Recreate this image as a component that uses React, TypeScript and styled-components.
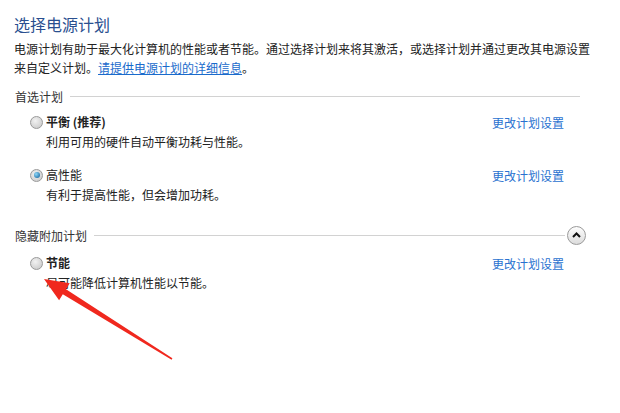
import React, { FC } from "react";
import styled, { createGlobalStyle } from "styled-components";

const GlobalStyle = createGlobalStyle`
  html, body {
    margin: 0;
    padding: 0;
    background: #fff;
  }
  body {
    font-family: "Noto Sans CJK SC", "Noto Sans", sans-serif;
    color: #222;
    font-size: 12px;
  }
`;

type Plan = {
  name: string;
  desc: string;
  bold: boolean;
  checked: boolean;
};

const preferred: Plan[] = [
  { name: "平衡 (推荐)", desc: "利用可用的硬件自动平衡功耗与性能。", bold: true, checked: false },
  { name: "高性能", desc: "有利于提高性能，但会增加功耗。", bold: false, checked: true },
];

const extra: Plan[] = [
  { name: "节能", desc: "尽可能降低计算机性能以节能。", bold: true, checked: false },
];

const Page = styled.div`
  position: relative;
  width: 620px;
  height: 413px;
  padding: 14px 0 0 14px;
  box-sizing: border-box;
  overflow: hidden;
`;

const Content = styled.div`
  width: 566px;
  display: flex;
  flex-direction: column;
`;

const Title = styled.h1`
  margin: 0;
  font-size: 16px;
  line-height: 20px;
  font-weight: normal;
  color: #2a4f8f;
`;

const Intro = styled.p`
  margin: 5px 0 0;
  line-height: 19px;
  white-space: nowrap;
`;

const Link = styled.a<{ $plain?: boolean }>`
  color: ${({ $plain }) => ($plain ? "#2a72d0" : "#1a6bcc")};
  text-decoration: ${({ $plain }) => ($plain ? "none" : "underline")};
  cursor: pointer;
`;

const SectionHeader = styled.div<{ $top: number }>`
  display: flex;
  align-items: center;
  height: 20px;
  margin-top: ${({ $top }) => $top}px;
  padding-left: 1px;
  color: #333;
`;

const Rule = styled.div`
  flex: 1;
  height: 1px;
  margin-left: 7px;
  background: #d2d2d2;
`;

const ToggleButton = styled.button`
  width: 19px;
  height: 19px;
  margin-left: 2px;
  margin-right: -6px;
  padding: 0;
  border-radius: 50%;
  border: 1px solid #9a9a9a;
  background: linear-gradient(#fdfdfd, #dcdcdc);
  display: flex;
  align-items: center;
  justify-content: center;
`;

const PlanList = styled.div<{ $top: number }>`
  display: flex;
  flex-direction: column;
  gap: 13px;
  padding: 0 16px 0 16px;
  margin-top: ${({ $top }) => $top}px;
`;

const PlanRow = styled.div`
  display: grid;
  grid-template-columns: 16px 1fr auto;
  grid-template-rows: 20px 20px;
  align-items: center;
`;

const Radio = styled.span<{ $checked: boolean }>`
  width: 11px;
  height: 11px;
  border-radius: 50%;
  border: 1px solid #9a9a9a;
  background: radial-gradient(circle at 40% 35%, #f2f2f2, #c4c4c4);
  display: flex;
  align-items: center;
  justify-content: center;
  box-sizing: content-box;

  &::after {
    content: "";
    display: ${({ $checked }) => ($checked ? "block" : "none")};
    width: 6px;
    height: 6px;
    border-radius: 50%;
    background: radial-gradient(circle at 35% 35%, #8fd8f8, #0a5a96);
  }
`;

const PlanName = styled.span<{ $bold: boolean }>`
  font-weight: ${({ $bold }) => ($bold ? 700 : 400)};
  line-height: 20px;
`;

const PlanDesc = styled.span`
  grid-column: 2 / 4;
  line-height: 20px;
`;

const Arrow = styled.svg`
  position: absolute;
  left: 0;
  top: 0;
  pointer-events: none;
`;

const PlanItem: FC<{ plan: Plan }> = ({ plan }) => (
  <PlanRow>
    <Radio $checked={plan.checked} />
    <PlanName $bold={plan.bold}>{plan.name}</PlanName>
    <Link $plain>更改计划设置</Link>
    <PlanDesc>{plan.desc}</PlanDesc>
  </PlanRow>
);

export default function App() {
  return (
    <Page>
      <GlobalStyle />
      <Content>
        <Title>选择电源计划</Title>
        <Intro>
          电源计划有助于最大化计算机的性能或者节能。通过选择计划来将其激活，或选择计划并通过更改其电源设置
          <br />
          来自定义计划。<Link>请提供电源计划的详细信息</Link>。
        </Intro>

        <SectionHeader $top={9}>
          首选计划
          <Rule />
        </SectionHeader>
        <PlanList $top={6}>
          {preferred.map((p) => (
            <PlanItem key={p.name} plan={p} />
          ))}
        </PlanList>

        <SectionHeader $top={20}>
          隐藏附加计划
          <Rule />
          <ToggleButton>
            <svg width="9" height="6" viewBox="0 0 9 6">
              <path d="M1 5 L4.5 1.5 L8 5" fill="none" stroke="#111" strokeWidth="2" />
            </svg>
          </ToggleButton>
        </SectionHeader>
        <PlanList $top={8}>
          {extra.map((p) => (
            <PlanItem key={p.name} plan={p} />
          ))}
        </PlanList>
      </Content>

      <Arrow width="620" height="413" viewBox="0 0 620 413">
        <polygon
          points="44,279 69.7,283.2 66,289.2 172.4,358.3 171.6,359.7 62.8,294.2 59.1,300.2"
          fill="#f0281e"
        />
      </Arrow>
    </Page>
  );
}
